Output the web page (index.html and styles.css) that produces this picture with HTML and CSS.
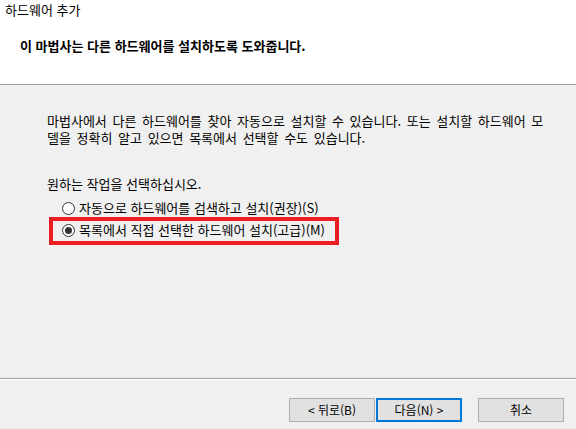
FILE: index.html
```html
<!DOCTYPE html>
<html lang="ko">
<head>
<meta charset="utf-8">
<link rel="stylesheet" href="styles.css">
</head>
<body>
<div class="win">
  <header class="head">
    <div class="title">하드웨어 추가</div>
    <div class="heading">이 마법사는 다른 하드웨어를 설치하도록 도와줍니다.</div>
  </header>
  <main class="main">
    <p class="desc">마법사에서 다른 하드웨어를 찾아 자동으로 설치할 수 있습니다. 또는 설치할 하드웨어 모<br>델을 정확히 알고 있으면 목록에서 선택할 수도 있습니다.</p>
    <p class="prompt">원하는 작업을 선택하십시오.</p>
    <div class="options">
      <div class="opt"><span class="radio"></span><span>자동으로 하드웨어를 검색하고 설치(권장)(S)</span></div>
      <div class="opt marked"><span class="radio on"></span><span>목록에서 직접 선택한 하드웨어 설치(고급)(M)</span><span class="mark"></span></div>
    </div>
  </main>
  <div class="sep"></div>
  <footer class="foot">
    <button class="btn">&lt; 뒤로(B)</button>
    <button class="btn def">다음(N) &gt;</button>
    <button class="btn cancel">취소</button>
  </footer>
</div>
</body>
</html>
```
FILE: styles.css
```css
html, body {
  margin: 0;
  padding: 0;
}
body {
  width: 576px;
  height: 429px;
  overflow: hidden;
  background: #f0f0f0;
  font-family: "Noto Sans CJK KR", "Noto Sans", sans-serif;
  font-size: 13px;
  color: #000;
}
.win {
  display: flex;
  flex-direction: column;
  height: 429px;
}
.head {
  background: #fff;
  height: 84px;
  border-bottom: 1px solid #a0a0a0;
  box-sizing: content-box;
}
.title {
  padding-left: 5px;
  line-height: 20px;
}
.heading {
  margin-top: 17px;
  padding-left: 20px;
  font-weight: bold;
  line-height: 18px;
}
.main {
  flex: 1;
  padding: 27px 0 0 47px;
}
.desc {
  margin: 0;
  line-height: 17px;
  word-spacing: 2px;
}
.prompt {
  margin: 29px 0 0;
  line-height: 17px;
}
.options {
  margin-top: 6px;
  padding-left: 15px;
  display: flex;
  flex-direction: column;
  gap: 2px;
}
.opt {
  position: relative;
  display: flex;
  align-items: center;
  gap: 4px;
  height: 20px;
  line-height: 20px;
}
.radio {
  box-sizing: border-box;
  width: 13px;
  height: 13px;
  border: 1px solid #333;
  border-radius: 50%;
  background: #fff;
  display: flex;
  align-items: center;
  justify-content: center;
  flex: none;
}
.radio.on::after {
  content: "";
  width: 7px;
  height: 7px;
  border-radius: 50%;
  background: #333;
}
.mark {
  position: absolute;
  left: -13px;
  top: -3px;
  width: 282px;
  height: 20px;
  border: 4px solid #ed1c24;
}
.sep {
  height: 1px;
  background: #a0a0a0;
  border-bottom: 1px solid #fff;
}
.foot {
  flex: none;
  height: 49px;
  box-sizing: border-box;
  padding: 18px 12px 0 0;
  display: flex;
  justify-content: flex-end;
  align-items: flex-start;
  gap: 1px;
}
.btn {
  width: 86px;
  height: 24px;
  box-sizing: border-box;
  background: #e1e1e1;
  border: 1px solid #adadad;
  font-family: "Noto Sans CJK KR", "Noto Sans", sans-serif;
  font-size: 12px;
  color: #000;
  padding: 0;
  line-height: 20px;
}
.btn.def {
  border: 2px solid #0078d7;
}
.btn.cancel {
  margin-left: 15px;
}
```
